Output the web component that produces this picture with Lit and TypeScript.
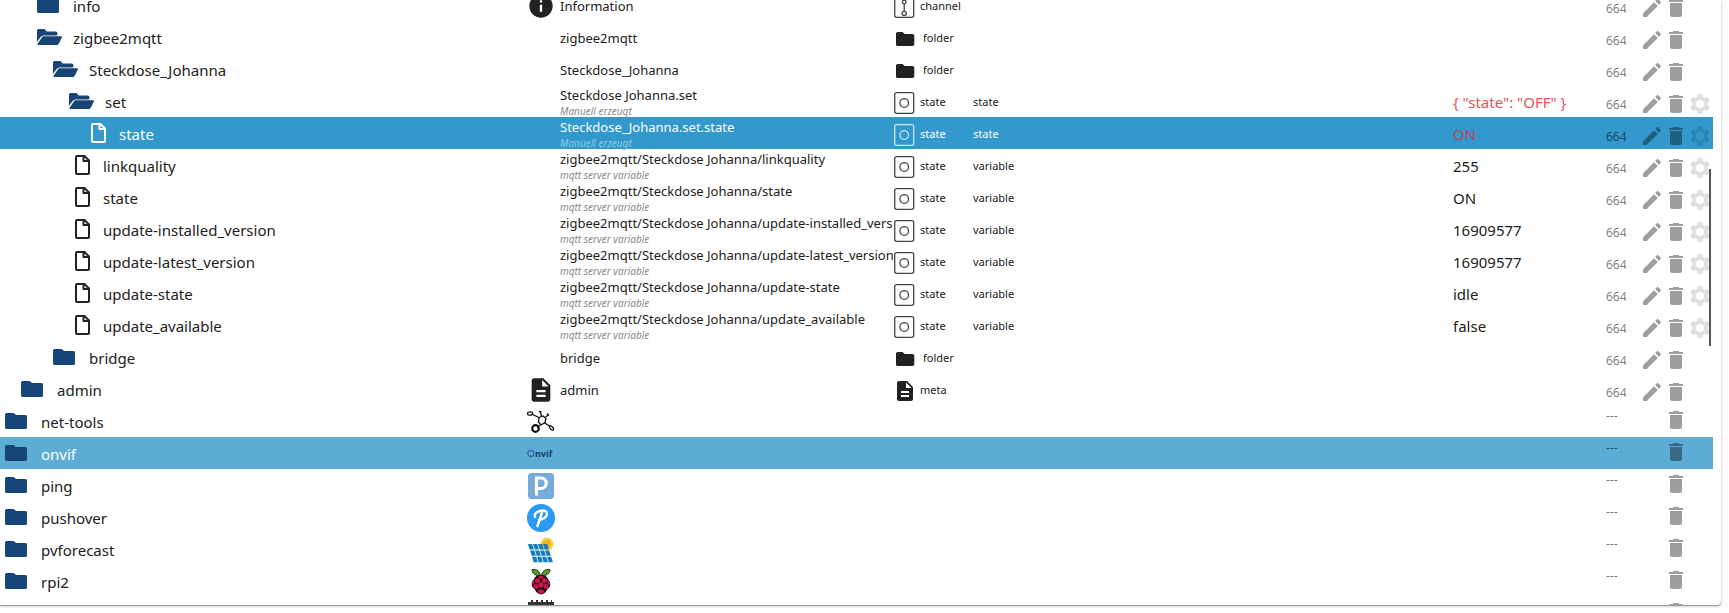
import { LitElement, html, svg, css, nothing } from "lit";
import type { TemplateResult } from "lit";
import { customElement, state } from "lit/decorators.js";
import { classMap } from "lit/directives/class-map.js";
import { styleMap } from "lit/directives/style-map.js";

type NodeIcon = "closed" | "open" | "file";
type ObjectType = "channel" | "folder" | "state" | "meta";

interface ObjectRow {
  id: string;
  label: string;
  level: number;
  node: NodeIcon;
  picture?: string;
  name?: string;
  desc?: string;
  type?: ObjectType;
  role?: string;
  value?: string;
  unacknowledged?: boolean;
  instance?: boolean;
}

const variable = (label: string, value: string): ObjectRow => ({
  id: `zigbee2mqtt.Steckdose_Johanna.${label}`,
  label,
  level: 4,
  node: "file",
  name: `zigbee2mqtt/Steckdose Johanna/${label}`,
  desc: "mqtt server variable",
  type: "state",
  role: "variable",
  value,
});

const instance = (label: string): ObjectRow => ({
  id: label, label, level: 0, node: "closed", picture: label, instance: true,
});

const ROWS: ObjectRow[] = [
  { id: "info", label: "info", level: 2, node: "closed", picture: "info", name: "Information", type: "channel" },
  { id: "zigbee2mqtt", label: "zigbee2mqtt", level: 2, node: "open", name: "zigbee2mqtt", type: "folder" },
  { id: "Steckdose_Johanna", label: "Steckdose_Johanna", level: 3, node: "open", name: "Steckdose_Johanna", type: "folder" },
  { id: "set", label: "set", level: 4, node: "open", name: "Steckdose Johanna.set", desc: "Manuell erzeugt", type: "state", role: "state", value: '{ "state": "OFF" }', unacknowledged: true },
  { id: "set.state", label: "state", level: 5, node: "file", name: "Steckdose_Johanna.set.state", desc: "Manuell erzeugt", type: "state", role: "state", value: "ON", unacknowledged: true },
  variable("linkquality", "255"),
  variable("state", "ON"),
  variable("update-installed_version", "16909577"),
  variable("update-latest_version", "16909577"),
  variable("update-state", "idle"),
  variable("update_available", "false"),
  { id: "bridge", label: "bridge", level: 3, node: "closed", name: "bridge", type: "folder" },
  { id: "admin", label: "admin", level: 1, node: "closed", picture: "doc", name: "admin", type: "meta" },
  instance("net-tools"),
  instance("onvif"),
  instance("ping"),
  instance("pushover"),
  instance("pvforecast"),
  instance("rpi2"),
  instance("sonoff"),
];

const DOC = "M14 2H6c-1.1 0-2 .9-2 2v16c0 1.1.9 2 2 2h12c1.1 0 2-.9 2-2V8l-6-6zm2 16H8v-2h8v2zm0-4H8v-2h8v2zm-3-5V3.500L18.500 9H13z";

const NODE_ICONS: Record<NodeIcon, TemplateResult> = {
  closed: html`<svg class="node folder" width="36" height="20" viewBox="0 0 36 20" aria-hidden="true">
    <path d="M1.500 2h7l2.500 2H20.500a1.500 1.500 0 0 1 1.500 1.500V16.500a1.500 1.500 0 0 1-1.500 1.500H1.500A1.500 1.500 0 0 1 0 16.500V3.500a1.500 1.500 0 0 1 1.500-1.500z"/></svg>`,
  open: html`<svg class="node folder" width="36" height="20" viewBox="0 0 36 20" aria-hidden="true">
    <path d="M1.400 2H7.500l2.300 2.400h9a1.500 1.500 0 0 1 1.500 1.500V8.400H6.200a3 3 0 0 0-2.600 1.500L0 15V3.500a1.500 1.500 0 0 1 1.400-1.500z"/>
    <path d="M6.600 9.300H24.200a.8.800 0 0 1 .7 1.200l-3.500 6.700a1.600 1.600 0 0 1-1.400.8H1.400a.8.800 0 0 1-.7-1.200l4.300-6.600a1.800 1.800 0 0 1 1.600-.9z"/></svg>`,
  file: html`<svg class="node file" width="34" height="24" viewBox="0 0 34 24" aria-hidden="true">
    <path d="M8 3h7.500l4.500 4.500v12.500a1 1 0 0 1-1 1H8a1 1 0 0 1-1-1V4a1 1 0 0 1 1-1zM14.500 3.500v4.500h5"/></svg>`,
};

const TYPE_ICONS: Record<ObjectType, TemplateResult> = {
  state: html`<svg class="outline" width="22" height="24" viewBox="0 0 22 24" aria-hidden="true">
    <rect x="1.700" y="1.700" width="19" height="20.600" rx="2"/><circle cx="11.200" cy="12" r="4.300"/></svg>`,
  channel: html`<svg class="outline" width="22" height="24" viewBox="0 0 22 24" aria-hidden="true">
    <rect x="1.700" y="1.700" width="19" height="20.600" rx="2"/><path d="M11.200 9v7"/><circle cx="11.200" cy="7" r="1.800"/><circle cx="11.200" cy="18.500" r="2.100"/></svg>`,
  folder: html`<svg class="solid" width="24" height="24" viewBox="0 0 24 24" aria-hidden="true">
    <path d="M4.500 5h5l2.200 2H19.500a1.800 1.800 0 0 1 1.800 1.800v8.400a1.800 1.800 0 0 1-1.800 1.800H4.500a1.500 1.500 0 0 1-1.500-1.500V6.500A1.500 1.500 0 0 1 4.500 5z"/></svg>`,
  meta: html`<svg class="solid meta" width="22" height="24" viewBox="1 0 22 24" aria-hidden="true"><path d=${DOC}/></svg>`,
};

const PANEL_CELLS = [0, 1, 2].flatMap((r) => [0, 1, 2, 3].map((c) => {
  const x = 1 + c * 5 + r * 2;
  const y = 8 + r * 6.400;
  return svg`<path d="M${x} ${y}h4.200l1.700 5.400h-4.200z"/>`;
}));

const PICTURES: Record<string, TemplateResult> = {
  info: html`<svg class="picture" viewBox="0 0 24 24" aria-hidden="true">
    <circle cx="12" cy="12" r="10" fill="#212121"/><path d="M11 7h2v2h-2zM11 11h2v6h-2z" fill="#fff"/></svg>`,
  doc: html`<svg class="picture" viewBox="0 0 24 24" aria-hidden="true"><path fill="#212121" d=${DOC}/></svg>`,
  "net-tools": html`<svg class="picture" viewBox="0 0 28 28" aria-hidden="true">
    <g fill="none" stroke="#111" stroke-width="1.300">
      <ellipse cx="3" cy="5.500" rx="2.600" ry="1.700"/><path d="M5.500 6.500l6.500 3M14.500 8.500l-1-4M18.500 9l3-2M13 17l-3 2.500M17.500 15l6 3.500M12 3.500l2.500.5M20 5.500l2 2"/>
      <path d="M12 9.500l4-1.500 3 2.500-1 4-4 2.500-2.500-3z"/>
      <circle cx="8.500" cy="20.500" r="3.300" stroke-width="2.200"/><ellipse cx="24.500" cy="20" rx="2.600" ry="1.300" transform="rotate(45 24.500 20)"/>
    </g></svg>`,
  onvif: html`<svg class="picture" viewBox="0 0 28 28" aria-hidden="true">
    <circle cx="3.800" cy="13.500" r="3" fill="none" stroke="#2b6c9c" stroke-width="1.300"/>
    <text x="8" y="16.500" font-size="9" font-weight="700" fill="#153f63">nvif</text></svg>`,
  ping: html`<svg class="picture" viewBox="0 0 28 28" aria-hidden="true">
    <rect x="1" y="1" width="26" height="26" rx="3.500" fill="#78a9db"/>
    <path d="M9.500 23.500V6H14a5 5 0 0 1 0 10.500H9.500" fill="none" stroke="#fff" stroke-width="3.200"/></svg>`,
  pushover: html`<svg class="picture" viewBox="0 0 28 28" aria-hidden="true">
    <circle cx="14" cy="14" r="14" fill="#2b9af0"/>
    <path d="M15.500 7L10.500 22M8 13c-1.500-4 4-6.500 8-6.500 6 0 5.500 8-4 9.500" fill="none" stroke="#fff" stroke-width="2.400" stroke-linecap="round"/></svg>`,
  pvforecast: html`<svg class="picture" viewBox="0 0 28 28" aria-hidden="true">
    <circle cx="20" cy="8" r="6.500" fill="#fbd04a"/><circle cx="20" cy="8" r="4" fill="#f6b21b"/>
    <g fill="#147cc0">${PANEL_CELLS}</g></svg>`,
  rpi2: html`<svg class="picture" viewBox="0 0 28 28" aria-hidden="true">
    <path d="M13.500 8C8 8 5 5 5 1.500c5-.5 8 1.500 8.500 6.500zM14.500 8c5.500 0 8.500-3 8.500-6.500-5-.5-8 1.500-8.500 6.500z" fill="#569b30" stroke="#1d3a10"/>
    <path d="M14 7c4 0 6.500 1.800 7.500 5 3 3 2 7-1 9-1.500 3-4 5.500-6.500 5.500S9 24 7.500 21c-3-2-4-6-1-9C7.500 8.800 10 7 14 7z" fill="#2a0713"/>
    <g fill="#c51a4a"><ellipse cx="14" cy="9.300" rx="2.800" ry="1.500"/><circle cx="10.500" cy="12.700" r="2.500"/><circle cx="17.500" cy="12.700" r="2.500"/>
      <circle cx="14" cy="17" r="2.700"/><circle cx="9" cy="18.500" r="2.400"/><circle cx="19" cy="18.500" r="2.400"/><ellipse cx="14" cy="23.500" rx="2.900" ry="2"/>
      <ellipse cx="6.300" cy="15" rx="1" ry="2"/><ellipse cx="21.700" cy="15" rx="1" ry="2"/></g></svg>`,
  sonoff: html`<svg class="picture" viewBox="0 0 28 28" aria-hidden="true">
    <path d="M1 2h3V0h2v2h3V0h2v2h3V0h2v2h3V0h2v2h3V0h1v2h2v22H1z" fill="#333"/></svg>`,
};

const PENCIL = html`<svg viewBox="0 0 24 24" aria-hidden="true"><path d="M3 17.250V21h3.750L17.810 9.940l-3.750-3.750L3 17.250zM20.710 7.040a1 1 0 0 0 0-1.410l-2.340-2.340a1 1 0 0 0-1.410 0l-1.830 1.830 3.750 3.750 1.830-1.830z"/></svg>`;
const TRASH = html`<svg viewBox="0 0 24 24" aria-hidden="true"><path d="M6 19c0 1.100.9 2 2 2h8c1.100 0 2-.9 2-2V7H6v12zM19 4h-3.500l-1-1h-5l-1 1H5v2h14V4z"/></svg>`;
const GEAR = html`<svg viewBox="0 0 24 24" aria-hidden="true"><path fill-rule="evenodd" d="M19.430 12.980c.04-.32.070-.64.070-.98s-.03-.66-.07-.98l2.110-1.650c.19-.15.240-.42.120-.64l-2-3.460c-.12-.22-.39-.3-.61-.22l-2.490 1c-.52-.4-1.080-.73-1.690-.98l-.38-2.650C14.460 2.180 14.250 2 14 2h-4c-.25 0-.46.180-.49.420l-.38 2.650c-.61.250-1.170.590-1.690.980l-2.490-1c-.23-.09-.49 0-.61.220l-2 3.460c-.13.220-.07.490.12.640l2.110 1.650c-.04.320-.07.650-.07.980s.03.660.07.980l-2.110 1.650c-.19.150-.24.420-.12.640l2 3.460c.12.220.39.300.61.220l2.490-1c.52.400 1.080.730 1.690.980l.38 2.650c.03.240.240.420.49.420h4c.25 0 .46-.18.490-.42l.38-2.650c.61-.25 1.170-.59 1.690-.98l2.490 1c.23.090.49 0 .61-.22l2-3.460c.12-.22.070-.49-.12-.64l-2.110-1.650zM12 16a4 4 0 1 1 0-8 4 4 0 0 1 0 8z"/></svg>`;

@customElement("app-root")
export class AppRoot extends LitElement {
  @state() private selected = "set.state";
  @state() private highlighted = "onvif";

  static styles = css`
    :host {
      display: block;
      height: 100vh;
      box-sizing: border-box;
      padding: 0 8px 8px 0;
      overflow: hidden;
      background: #fdfdfd;
      color: #212121;
      font-family: "Noto Sans", "Open Sans", sans-serif;
    }
    .panel {
      position: relative;
      height: 100%;
      box-sizing: border-box;
      padding-right: 8px;
      overflow: hidden;
      background: #fff;
      border-radius: 0 0 4px 0;
      box-shadow: 0 1px 3px rgba(0, 0, 0, 0.25), 0 1px 1px rgba(0, 0, 0, 0.3);
    }
    table { display: block; margin-top: -11px; }
    tbody { display: block; }
    tr {
      display: grid;
      grid-template-columns: 527fr 33px 333fr 80px 480fr 153px 34px 24px 24px 25px;
      height: 32px;
    }
    td {
      display: flex;
      align-items: center;
      min-width: 0;
      padding: 2px 0 0;
      white-space: nowrap;
    }
    .tree { font-size: 15px; line-height: 20px; }
    .node { flex: none; margin-bottom: 2px; }
    .folder { fill: #164477; }
    .file { fill: none; stroke: currentColor; stroke-width: 2; stroke-linejoin: round; }
    .picture { width: 28px; height: 28px; }
    .name {
      flex-direction: column;
      align-items: flex-start;
      justify-content: center;
      overflow-x: clip;
      font-size: 13px;
      line-height: 20px;
    }
    .described { padding: 0; }
    .desc { color: #8a8a8a; font-size: 10px; font-style: italic; line-height: 12px; }
    .type, .role { font-size: 11px; line-height: 16px; }
    .type { gap: 5px; }
    .type svg { flex: none; margin-top: 2px; }
    .folder-type { gap: 6px; }
    .meta-type svg { margin-left: 1px; }
    .meta-type { gap: 4px; }
    .outline { fill: none; stroke: #444; stroke-width: 1.300; }
    .solid { fill: currentColor; }
    .value { font-size: 15px; line-height: 20px; }
    .pending { color: #e0565b; }
    .perms { padding-top: 8px; color: rgba(0, 0, 0, 0.55); font-size: 12px; line-height: 16px; }
    .action { padding-top: 6px; }
    .instance .action { padding: 0 0 2px; }
    .instance .perms { padding: 0 0 10px; }
    button {
      display: block;
      width: 24px;
      height: 24px;
      padding: 0;
      border: 0;
      background: none;
      color: inherit;
      cursor: pointer;
    }
    button svg { display: block; width: 24px; height: 24px; fill: rgba(0, 0, 0, 0.38); }
    .config svg { fill: rgba(0, 0, 0, 0.12); }
    .selected { background: #3399cc; color: #fff; }
    .highlighted { background: #5cacd6; color: #fff; }
    .selected .desc { color: #8fc6e4; }
    .selected .outline { stroke: #c4e8fb; }
    .selected .pending { color: #c0455f; }
    .thumb {
      position: absolute;
      top: 169px;
      right: 10px;
      width: 2px;
      height: 177px;
      background: #555;
    }
  `;

  private renderRow(row: ObjectRow) {
    const classes = {
      instance: !!row.instance,
      selected: row.id === this.selected,
      highlighted: row.id === this.highlighted,
    };
    const typeClasses = {
      type: true,
      "folder-type": row.type === "folder",
      "meta-type": row.type === "meta",
    };
    return html`<tr class=${classMap(classes)} @click=${() => (this.selected = row.id)}>
      <td class="tree" style=${styleMap({ paddingLeft: `${5 + row.level * 16}px` })}>${NODE_ICONS[row.node]}<span>${row.label}</span></td>
      <td>${row.picture ? PICTURES[row.picture] : nothing}</td>
      <td class=${classMap({ name: true, described: !!row.desc })}>${row.name ? html`<span>${row.name}</span>` : nothing}${row.desc ? html`<span class="desc">${row.desc}</span>` : nothing}</td>
      <td class=${classMap(typeClasses)}>${row.type ? html`${TYPE_ICONS[row.type]}<span>${row.type}</span>` : nothing}</td>
      <td class="role">${row.role ?? nothing}</td>
      <td class=${classMap({ value: true, pending: !!row.unacknowledged })}>${row.value ?? nothing}</td>
      <td class="perms">${row.instance ? "---" : "664"}</td>
      <td class="action">${row.instance ? nothing : html`<button aria-label="Edit ${row.label}">${PENCIL}</button>`}</td>
      <td class="action"><button aria-label="Delete ${row.label}">${TRASH}</button></td>
      <td class="action">${row.value ? html`<button class="config" aria-label="Configure ${row.label}">${GEAR}</button>` : nothing}</td>
    </tr>`;
  }

  render() {
    return html`<div class="panel">
      <table><tbody>${ROWS.map((row) => this.renderRow(row))}</tbody></table>
      <div class="thumb"></div>
    </div>`;
  }
}
